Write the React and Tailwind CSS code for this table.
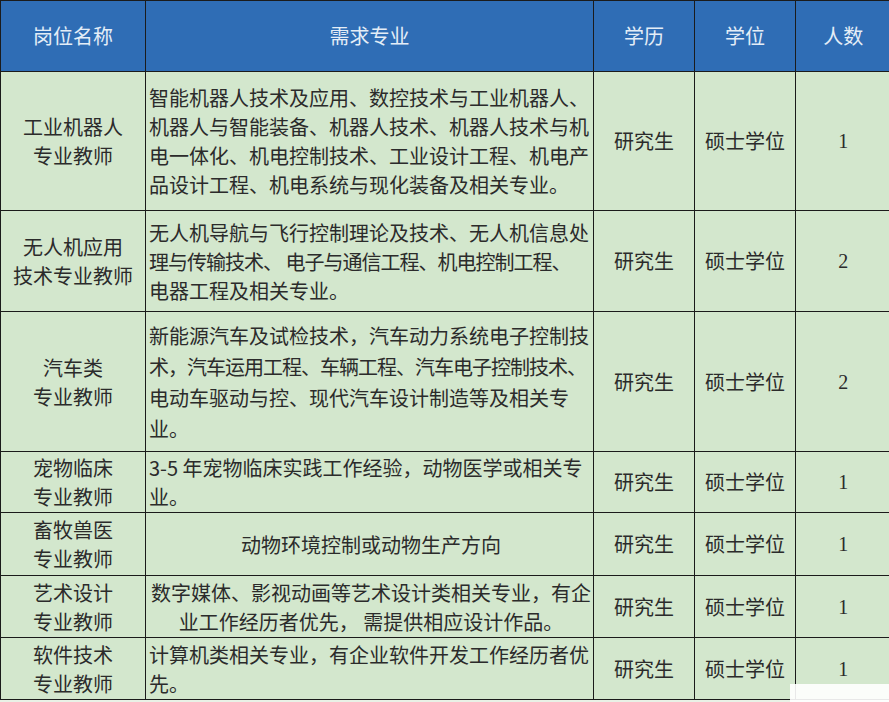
const rows = [
  {
    name: ["工业机器人", "专业教师"],
    major: [
      "智能机器人技术及应用、数控技术与工业机器人、",
      "机器人与智能装备、机器人技术、机器人技术与机",
      "电一体化、机电控制技术、工业设计工程、机电产",
      "品设计工程、机电系统与现化装备及相关专业。",
    ],
    count: "1",
    h: "h-[139px]",
  },
  {
    name: ["无人机应用", "技术专业教师"],
    major: [
      "无人机导航与飞行控制理论及技术、无人机信息处",
      "理与传输技术、 电子与通信工程、机电控制工程、",
      "电器工程及相关专业。",
    ],
    count: "2",
    h: "h-[101px]",
  },
  {
    name: ["汽车类", "专业教师"],
    major: [
      "新能源汽车及试检技术，汽车动力系统电子控制技",
      "术，汽车运用工程、车辆工程、汽车电子控制技术、",
      "电动车驱动与控、现代汽车设计制造等及相关专",
      "业。",
    ],
    count: "2",
    h: "h-[140px]",
    lead: "leading-[31px]",
  },
  {
    name: ["宠物临床", "专业教师"],
    major: ["3-5 年宠物临床实践工作经验，动物医学或相关专", "业。"],
    count: "1",
    h: "h-[61px]",
  },
  {
    name: ["畜牧兽医", "专业教师"],
    major: ["动物环境控制或动物生产方向"],
    count: "1",
    h: "h-[63px]",
    center: true,
  },
  {
    name: ["艺术设计", "专业教师"],
    major: ["数字媒体、影视动画等艺术设计类相关专业，有企", "业工作经历者优先， 需提供相应设计作品。"],
    count: "1",
    h: "h-[62px]",
    center: true,
  },
  {
    name: ["软件技术", "专业教师"],
    major: ["计算机类相关专业，有企业软件开发工作经历者优", "先。"],
    count: "1",
    h: "h-[62px]",
  },
];

const cjk = "font-['Noto_Sans_CJK_SC','Noto_Sans',sans-serif]";
const line = "border border-[#1b1b1b]";

export default function App() {
  return (
    <div className="relative w-[889px] h-[702px] overflow-hidden bg-[#e9f1e6]">
      <table
        className={`table-fixed border-collapse w-[890px] ${cjk} text-[20px] text-[#2b2b2b]`}
      >
        <colgroup>
          <col className="w-[145px]" />
          <col className="w-[448px]" />
          <col className="w-[101px]" />
          <col className="w-[101px]" />
          <col className="w-[95px]" />
        </colgroup>
        <thead>
          <tr className="h-[71px] bg-[#2f6db5] text-[#e4edf7]">
            <th className={`${line} font-normal`}>岗位名称</th>
            <th className={`${line} font-normal`}>需求专业</th>
            <th className={`${line} font-normal`}>学历</th>
            <th className={`${line} font-normal`}>学位</th>
            <th className={`${line} border-r-0 font-normal`}>人数</th>
          </tr>
        </thead>
        <tbody className="bg-[#d3e7cd]">
          {rows.map((r, i) => (
            <tr key={i} className={r.h}>
              <td className={`${line} text-center leading-[29px]`}>
                {r.name.map((t) => (
                  <div key={t}>{t}</div>
                ))}
              </td>
              <td
                className={`${line} pl-[3px] ${r.lead || "leading-[29px]"} ${
                  r.center ? "text-center" : "text-left"
                }`}
              >
                {r.major.map((t) => (
                  <div
                    key={t}
                    className={`whitespace-nowrap ${
                      t.length > 22 && !/\d/.test(t) ? "tracking-[-1px]" : ""
                    }`}
                  >
                    {t}
                  </div>
                ))}
              </td>
              <td className={`${line} text-center`}>研究生</td>
              <td className={`${line} text-center`}>硕士学位</td>
              <td className={`${line} border-r-0 text-center font-['Liberation_Serif',serif]`}>
                {r.count}
              </td>
            </tr>
          ))}
        </tbody>
      </table>
      {/* watermark strip over the bottom right corner */}
      <div className="absolute left-[790px] top-[684px] w-[99px] h-[18px] bg-white/90" />
    </div>
  );
}
